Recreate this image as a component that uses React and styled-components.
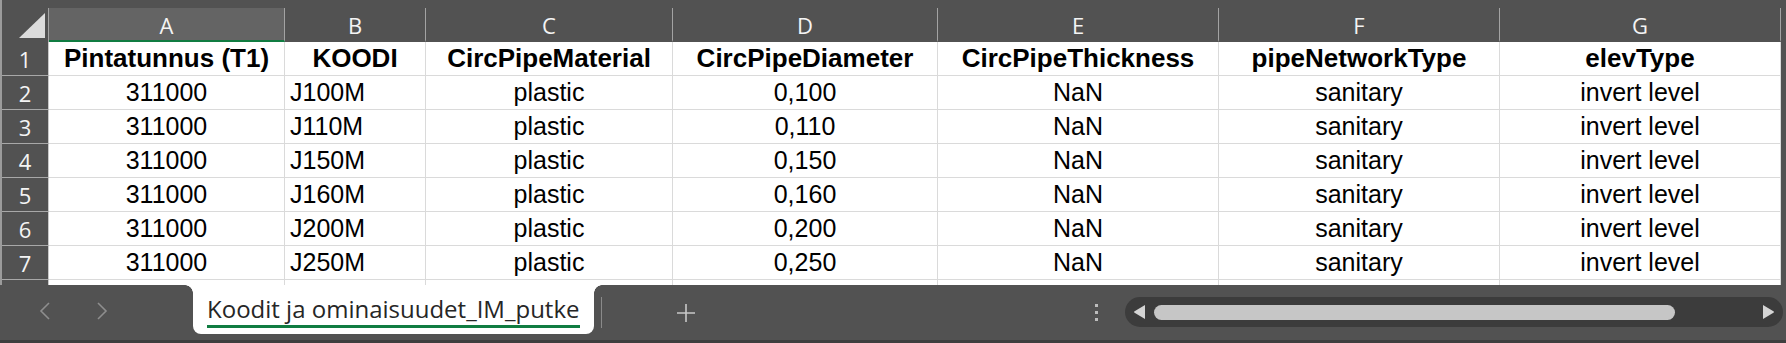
import React from "react";
import styled, { createGlobalStyle } from "styled-components";

const GlobalStyle = createGlobalStyle`
  html, body {
    margin: 0;
    padding: 0;
    background: #525252;
  }
  * { box-sizing: border-box; }
`;

const Window = styled.div`
  width: 1786px;
  height: 343px;
  display: flex;
  flex-direction: column;
  background: #525252;
  overflow: hidden;
`;

const TopStrip = styled.div`
  height: 8px;
  flex: none;
  display: flex;
`;

const EdgeLight = styled.div`
  width: 2px;
  flex: none;
  background: #9b9b9b;
`;

const GridArea = styled.div`
  height: 277px;
  flex: none;
  display: flex;
  overflow: hidden;
`;

const Sheet = styled.div`
  display: grid;
  grid-template-columns: 47px 236px 141px 247px 265px 281px 281px 281px;
  grid-template-rows: 34px repeat(8, 34px);
  width: 1779px;
  flex: none;
`;

const Corner = styled.div`
  background: #525252;
  border-right: 1px solid #a3a3a3;
  display: flex;
  align-items: flex-end;
  justify-content: flex-end;
  padding: 0 3px 4px 0;
`;

const ColHead = styled.div`
  background: ${(p) => (p.$active ? "#646464" : "#525252")};
  border-right: 1px solid #a3a3a3;
  border-bottom: 2px solid ${(p) => (p.$active ? "#107c41" : "#525252")};
  color: #f4f4f4;
  font-family: "Open Sans", "Noto Sans", sans-serif;
  font-size: 22px;
  display: flex;
  align-items: center;
  justify-content: center;
  padding-top: 2px;
`;

const RowHead = styled.div`
  background: #525252;
  border-bottom: 1px solid #a8a8a8;
  border-right: 1px solid #c9c9c9;
  color: #f4f4f4;
  font-family: "Open Sans", "Noto Sans", sans-serif;
  font-size: 22px;
  display: flex;
  align-items: center;
  justify-content: center;
`;

const Cell = styled.div`
  background: #fff;
  border-right: 1px solid #dadada;
  border-bottom: 1px solid #dadada;
  color: #000;
  font-family: "Liberation Sans", Arial, sans-serif;
  font-size: ${(p) => (p.$bold ? "26px" : "25px")};
  font-weight: ${(p) => (p.$bold ? 700 : 400)};
  display: flex;
  align-items: center;
  justify-content: ${(p) => (p.$left ? "flex-start" : "center")};
  padding-left: ${(p) => (p.$left ? "5px" : "0")};
  white-space: nowrap;
  overflow: hidden;
`;

const EdgeDark = styled.div`
  flex: 1;
  background: #525252;
`;

const TabBar = styled.div`
  height: 55px;
  flex: none;
  display: flex;
  align-items: flex-start;
  background: #525252;
`;

const NavArea = styled.div`
  width: 193px;
  height: 52px;
  flex: none;
  display: flex;
  align-items: center;
  padding-left: 39px;
  gap: 45px;
`;

const NavButton = styled.div`
  width: 12px;
  display: flex;
  align-items: center;
  justify-content: center;
`;

const SheetTab = styled.div`
  position: relative;
  width: 401px;
  height: 49px;
  flex: none;
  background: #fff;
  border-radius: 0 0 8px 8px;
  padding: 8px 0 0 14px;
  white-space: nowrap;

  &::before,
  &::after {
    content: "";
    position: absolute;
    top: 0;
    width: 8px;
    height: 8px;
  }
  &::before {
    left: -8px;
    background: radial-gradient(circle at 0 100%, transparent 7.5px, #fff 8px);
  }
  &::after {
    right: -8px;
    background: radial-gradient(circle at 100% 100%, transparent 7.5px, #fff 8px);
  }
`;

const TabLabel = styled.span`
  display: inline-block;
  font-family: "Open Sans", "Noto Sans", sans-serif;
  font-size: 24px;
  line-height: 31px;
  color: #262626;
  border-bottom: 3px solid #107c41;
  padding-bottom: 1px;
`;

const Divider = styled.div`
  width: 1px;
  height: 31px;
  margin: 12px 0 0 7px;
  background: #8a8a8a;
  flex: none;
`;

const AddButton = styled.div`
  width: 20px;
  height: 20px;
  margin: 18px 0 0 74px;
  flex: none;
  display: flex;
`;

const Spacer = styled.div`
  flex: 1;
`;

const MoreButton = styled.div`
  width: 4px;
  margin-top: 19px;
  display: flex;
  flex-direction: column;
  gap: 4px;
  flex: none;
`;

const Dot = styled.span`
  width: 3px;
  height: 3px;
  background: #bdbdbd;
`;

const ScrollTrack = styled.div`
  width: 658px;
  height: 30px;
  margin: 12px 3px 0 26px;
  flex: none;
  border-radius: 15px;
  background: #3c3c3c;
  display: flex;
  align-items: center;
  padding: 0 8px;
`;

const ScrollThumb = styled.div`
  width: 521px;
  height: 15px;
  margin-left: 9px;
  border-radius: 8px;
  background: #c6c6c6;
`;

const BottomStrip = styled.div`
  height: 3px;
  flex: none;
  background: #3e3e3e;
`;

const columns = ["A", "B", "C", "D", "E", "F", "G"];

const headers = [
  "Pintatunnus (T1)",
  "KOODI",
  "CircPipeMaterial",
  "CircPipeDiameter",
  "CircPipeThickness",
  "pipeNetworkType",
  "elevType",
];

const sizes = ["100", "110", "150", "160", "200", "250"];

const rows = sizes.map((s) => [
  "311000",
  `J${s}M`,
  "plastic",
  `0,${s}`,
  "NaN",
  "sanitary",
  "invert level",
]);

function Chevron({ dir }) {
  const pts = dir === "left" ? "10,1 2,9 10,17" : "2,1 10,9 2,17";
  return (
    <svg width="12" height="18" viewBox="0 0 12 18">
      <polyline points={pts} fill="none" stroke="#8e8e8e" strokeWidth="1.6" />
    </svg>
  );
}

function Arrow({ dir }) {
  const d = dir === "left" ? "M12 0 L12 14 L2 8 Q0 7 2 6 Z" : "M0 0 L0 14 L10 8 Q12 7 10 6 Z";
  return (
    <svg width="12" height="14" viewBox="0 0 12 14">
      <path d={d} fill="#d4d4d4" />
    </svg>
  );
}

export default function App() {
  return (
    <>
      <GlobalStyle />
      <Window>
        <TopStrip>
          <EdgeLight />
        </TopStrip>
        <GridArea>
          <EdgeLight />
          <Sheet>
            <Corner>
              <svg width="26" height="25" viewBox="0 0 26 25">
                <polygon points="26,0 26,25 0,25" fill="#dcdcdc" />
              </svg>
            </Corner>
            {columns.map((c) => (
              <ColHead key={c} $active={c === "A"}>
                {c}
              </ColHead>
            ))}

            <RowHead>1</RowHead>
            {headers.map((h) => (
              <Cell key={h} $bold>
                {h}
              </Cell>
            ))}

            {rows.map((r, i) => (
              <React.Fragment key={i}>
                <RowHead>{i + 2}</RowHead>
                {r.map((v, j) => (
                  <Cell key={j} $left={j === 1}>
                    {v}
                  </Cell>
                ))}
              </React.Fragment>
            ))}

            {/* row 8 only peeks in above the tab bar */}
            <RowHead />
            {columns.map((c) => (
              <Cell key={c} />
            ))}
          </Sheet>
          <EdgeDark />
        </GridArea>

        <TabBar>
          <NavArea>
            <NavButton>
              <Chevron dir="left" />
            </NavButton>
            <NavButton>
              <Chevron dir="right" />
            </NavButton>
          </NavArea>
          <SheetTab>
            <TabLabel>Koodit ja ominaisuudet_IM_putke</TabLabel>
          </SheetTab>
          <Divider />
          <AddButton>
            <svg width="20" height="20" viewBox="0 0 20 20">
              <path d="M10 1 V19 M1 10 H19" stroke="#c8c8c8" strokeWidth="1.6" />
            </svg>
          </AddButton>
          <Spacer />
          <MoreButton>
            <Dot />
            <Dot />
            <Dot />
          </MoreButton>
          <ScrollTrack>
            <Arrow dir="left" />
            <ScrollThumb />
            <Spacer />
            <Arrow dir="right" />
          </ScrollTrack>
        </TabBar>
        <BottomStrip />
      </Window>
    </>
  );
}
